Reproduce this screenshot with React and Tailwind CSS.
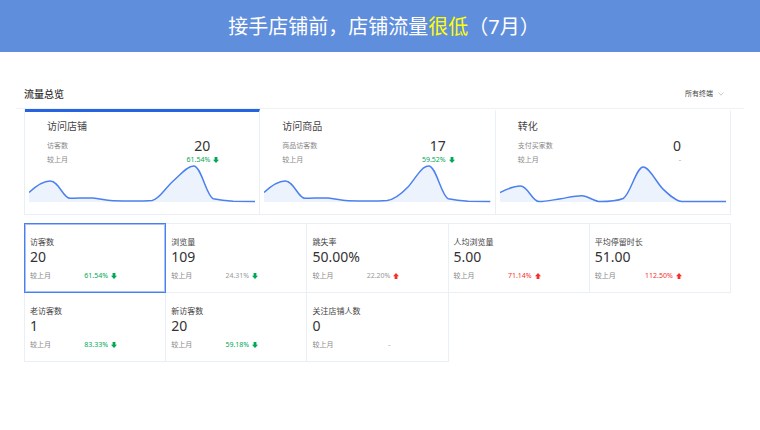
const TREND_SHOP =
  'M0 28.5C7 22 14 17 21 17C30 17 34 34.3 41 34.3C50 34.3 56 33.6 64 34C71 34.5 76 36.7 84 36.7C98 37 112 37.2 123 36.4C130 35.6 136 24 144 17C152 10 158 2 164.5 2C172 2 177 32 184 34.7C191 36.2 197 36.8 204 37.2L226 37.4';
const TREND_ITEM =
  'M0 28.5C7 22 14 17 21 17C30 17 34 34.3 41 34.3C50 34.3 56 33.6 64 34C71 34.5 76 36.5 84 36.7C98 37 112 37.2 123 36.4C130 35.6 137 30 144 22.7C151 15 157 2 164.5 2C172 2 177 32 184 34.7C191 36.2 197 36.8 204 37.2L226 37.4';
const TREND_PAY =
  'M0 28.5C7 25 14 22 20.5 22C28 22 32 37.6 39 37.6C46 37.6 53 35.8 60.7 34.7C68 33.5 75 31.7 81.7 31.7C88 31.7 94 37.6 100 37.6C108 37.6 116 37.2 123 34.5C130 31 136 3 143 3C149 3 156 18 162.3 24.6C169 31 176 37.6 181.7 37.6L226 37.6';

const cards = [
  { title: '访问店铺', metric: '访客数', value: '20', change: '61.54%', dir: 'down', trend: TREND_SHOP, active: true },
  { title: '访问商品', metric: '商品访客数', value: '17', change: '59.52%', dir: 'down', trend: TREND_ITEM },
  { title: '转化', metric: '支付买家数', value: '0', change: '-', trend: TREND_PAY },
];

const GREEN = 'text-[#00a854]';
const RED = 'text-[#f5302b]';
const GRAY = 'text-[#999]';

const tiles = [
  { label: '访客数', value: '20', change: '61.54%', dir: 'down', tone: GREEN, active: true },
  { label: '浏览量', value: '109', change: '24.31%', dir: 'down', tone: GRAY },
  { label: '跳失率', value: '50.00%', change: '22.20%', dir: 'up', tone: GRAY },
  { label: '人均浏览量', value: '5.00', change: '71.14%', dir: 'up', tone: RED },
  { label: '平均停留时长', value: '51.00', change: '112.50%', dir: 'up', tone: RED },
  { label: '老访客数', value: '1', change: '83.33%', dir: 'down', tone: GREEN },
  { label: '新访客数', value: '20', change: '59.18%', dir: 'down', tone: GREEN },
  { label: '关注店铺人数', value: '0', change: '-', tone: GRAY },
];

function Arrow({ dir }) {
  if (!dir) return <span className="w-[6px] shrink-0" />;
  return (
    <svg viewBox="0 0 6 6" className={`h-[6px] w-[6px] shrink-0 ${dir === 'up' ? RED : GREEN}`} aria-hidden="true">
      <path
        fill="currentColor"
        d={dir === 'up' ? 'M3 0L6 3.2H4.4V6H1.6V3.2H0Z' : 'M3 6L6 2.8H4.4V0H1.6V2.8H0Z'}
      />
    </svg>
  );
}

function TrendCard({ card }) {
  return (
    <button
      type="button"
      className={`block border-t-3 border-r border-b border-r-[#e9f0f5] border-b-[#e9f0f5] pt-[7px] pb-[11px] text-left ${
        card.active ? 'border-t-[#2563e0]' : 'border-t-transparent'
      }`}
    >
      <span className="block pl-[22px] text-[10px] leading-[14px] text-[#444]">{card.title}</span>
      <span className="mt-[6px] flex items-center justify-between pr-[49px] pl-[22px] leading-[14px]">
        <span className="text-[7px] text-[#888]">{card.metric}</span>
        <span className="text-[14px] text-[#333]">{card.value}</span>
      </span>
      <span className="mt-[2px] flex items-center pr-[40px] pl-[22px] text-[7px] leading-[10px]">
        <span className="flex-1 text-[#888]">较上月</span>
        <span className={`mr-[3px] ${card.dir ? GREEN : GRAY}`}>{card.change}</span>
        <Arrow dir={card.dir} />
      </span>
      <span className="block px-1">
        <svg viewBox="0 1 226 38" preserveAspectRatio="none" className="block h-[38px] w-full" aria-hidden="true">
          <path d={`${card.trend}V38H0Z`} fill="#edf3fd" />
          <path d={card.trend} fill="none" stroke="#4b80ee" strokeWidth="1.5" />
        </svg>
      </span>
    </button>
  );
}

function MetricTile({ tile }) {
  return (
    <button
      type="button"
      className={`-mt-px -ml-px block border pt-3 pb-[10px] pl-[5px] text-left ${
        tile.active ? 'relative z-10 border-[#4a7ff0] shadow-[inset_0_0_0_1px_#a9c2f8]' : 'border-[#e9f0f5]'
      }`}
    >
      <span className="block text-[8px] leading-[12px] text-[#444]">{tile.label}</span>
      <span className="block text-[14px] leading-[18px] text-[#333]">{tile.value}</span>
      <span className="mt-1 flex items-center text-[7px] leading-[12px]">
        <span className="text-[#888]">较上月</span>
        <span className={`mr-[3px] w-[57px] text-right ${tile.tone}`}>{tile.change}</span>
        <Arrow dir={tile.dir} />
      </span>
    </button>
  );
}

export default function App() {
  return (
    <div className="min-h-screen bg-white font-['Noto_Sans','Noto_Sans_CJK_SC',sans-serif]" lang="zh-CN">
      <header className="bg-[#5f8edc] pt-[13px] pb-[11px] pl-2 text-center">
        <h1 className="text-[20px] leading-[28px] font-normal text-white">
          接手店铺前，店铺流量<span className="text-[#ffff00]">很低</span>（7月）
        </h1>
      </header>

      <main className="px-4 pt-7">
        <div className="flex h-[29px] items-center justify-between border-b border-[#eef2f5] pr-5 pl-2">
          <h2 className="text-[10px] leading-[14px] font-medium text-[#333]">流量总览</h2>
          <label className="flex items-center gap-[5px]">
            <select
              aria-label="终端"
              className="appearance-none bg-transparent text-[7px] leading-[12px] text-[#444]"
              defaultValue="all"
            >
              <option value="all">所有终端</option>
            </select>
            <svg viewBox="0 0 6 4" className="h-1 w-[6px]" aria-hidden="true">
              <path d="M0.5 0.5L3 3.2L5.5 0.5" fill="none" stroke="#bbb" strokeWidth="0.8" />
            </svg>
          </label>
        </div>

        <div className="pr-[13px] pl-2">
          <div className="grid grid-cols-3 border-l border-[#e9f0f5]">
            {cards.map((card) => (
              <TrendCard key={card.title} card={card} />
            ))}
          </div>

          <div className="mt-2 grid grid-cols-5 pt-px pl-px">
            {tiles.map((tile) => (
              <MetricTile key={tile.label} tile={tile} />
            ))}
          </div>
        </div>
      </main>
    </div>
  );
}
